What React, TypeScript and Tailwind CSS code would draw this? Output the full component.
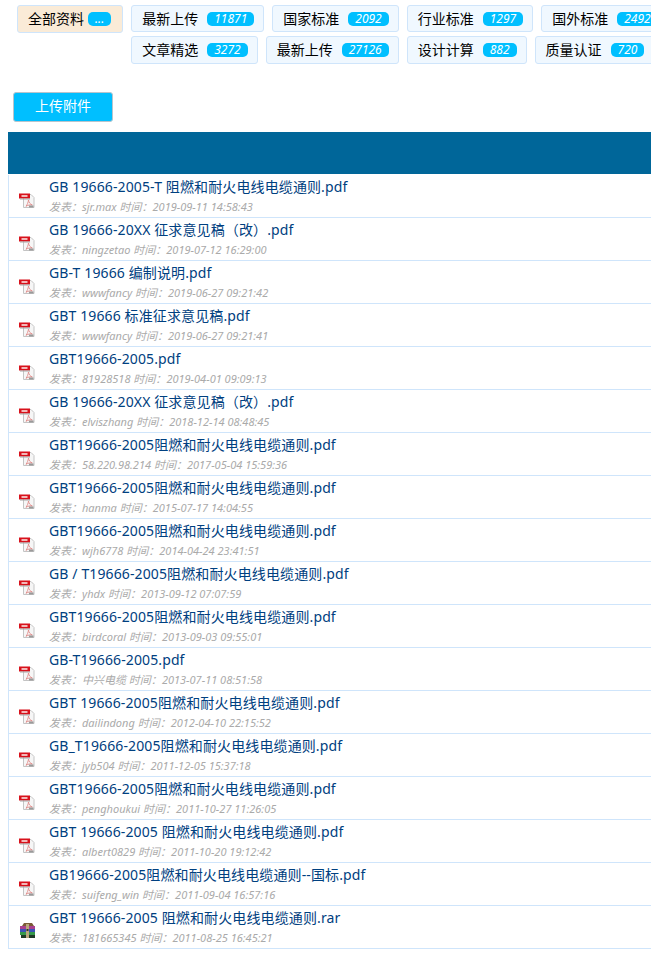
const row1 = [
  { name: "最新上传", count: "11871" },
  { name: "国家标准", count: "2092" },
  { name: "行业标准", count: "1297" },
  { name: "国外标准", count: "2492" },
];
const row2 = [
  { name: "文章精选", count: "3272" },
  { name: "最新上传", count: "27126" },
  { name: "设计计算", count: "882" },
  { name: "质量认证", count: "720" },
];

const files = [
  ["GB 19666-2005-T 阻燃和耐火电线电缆通则.pdf", "sjr.max", "2019-09-11 14:58:43"],
  ["GB 19666-20XX 征求意见稿（改）.pdf", "ningzetao", "2019-07-12 16:29:00"],
  ["GB-T 19666 编制说明.pdf", "wwwfancy", "2019-06-27 09:21:42"],
  ["GBT 19666 标准征求意见稿.pdf", "wwwfancy", "2019-06-27 09:21:41"],
  ["GBT19666-2005.pdf", "81928518", "2019-04-01 09:09:13"],
  ["GB 19666-20XX 征求意见稿（改）.pdf", "elviszhang", "2018-12-14 08:48:45"],
  ["GBT19666-2005阻燃和耐火电线电缆通则.pdf", "58.220.98.214", "2017-05-04 15:59:36"],
  ["GBT19666-2005阻燃和耐火电线电缆通则.pdf", "hanma", "2015-07-17 14:04:55"],
  ["GBT19666-2005阻燃和耐火电线电缆通则.pdf", "wjh6778", "2014-04-24 23:41:51"],
  ["GB / T19666-2005阻燃和耐火电线电缆通则.pdf", "yhdx", "2013-09-12 07:07:59"],
  ["GBT19666-2005阻燃和耐火电线电缆通则.pdf", "birdcoral", "2013-09-03 09:55:01"],
  ["GB-T19666-2005.pdf", "中兴电缆", "2013-07-11 08:51:58"],
  ["GBT 19666-2005阻燃和耐火电线电缆通则.pdf", "dailindong", "2012-04-10 22:15:52"],
  ["GB_T19666-2005阻燃和耐火电线电缆通则.pdf", "jyb504", "2011-12-05 15:37:18"],
  ["GBT19666-2005阻燃和耐火电线电缆通则.pdf", "penghoukui", "2011-10-27 11:26:05"],
  ["GBT 19666-2005 阻燃和耐火电线电缆通则.pdf", "albert0829", "2011-10-20 19:12:42"],
  ["GB19666-2005阻燃和耐火电线电缆通则--国标.pdf", "suifeng_win", "2011-09-04 16:57:16"],
  ["GBT 19666-2005 阻燃和耐火电线电缆通则.rar", "181665345", "2011-08-25 16:45:21"],
];

function PdfIcon() {
  return (
    <svg width="17" height="16" viewBox="0 0 17 16" className="mt-[10px] shrink-0">
      <path d="M4.500 1.500h7.500l3 3v10h-10.500z" fill="#f6f6f6" stroke="#c4c4c4" />
      <path d="M9.500 7c.3 2.500 1.800 4.300 3.800 5-2.200-.3-4.300 0-6.300 1.300 1.300-1.700 2.200-4 2.500-6.300z" fill="none" stroke="#e08a88" strokeWidth="0.900" />
      <rect x="10" y="12.500" width="4.500" height="2" fill="#9a9a9a" />
      <rect x="0" y="0.500" width="11" height="5" fill="#d8121c" />
      <rect x="1" y="5.500" width="10" height="1" fill="#a5a5a5" />
      <rect x="2.500" y="2" width="6" height="2" fill="#f3b7b7" />
    </svg>
  );
}

function RarIcon() {
  return (
    <svg width="16" height="15" viewBox="0 0 16 15" className="mt-[7px] ml-px shrink-0">
      <path d="M2 3l2-3h8l2 3z" fill="#7a5a36" />
      <rect x="0" y="3" width="15" height="3" fill="#a8408f" />
      <rect x="0" y="6" width="15" height="3" fill="#3c52b5" />
      <rect x="0" y="9" width="15" height="3" fill="#35994a" />
      <rect x="1" y="12" width="14" height="3" fill="#1f3a26" />
      <rect x="6" y="1" width="3" height="14" fill="#b9a67c" />
      <rect x="6.500" y="6" width="2" height="2" fill="#333333" />
    </svg>
  );
}

function Tab({ name, count, active, short }: { name: string; count: string; active?: boolean; short?: boolean }) {
  return (
    <div
      className={`flex shrink-0 items-center rounded-[3px] border border-[#cfe5fb] pl-[10px] text-[14px] leading-[20px] text-black ${
        active ? "gap-[4px] bg-[#faebd7] pr-[11px]" : "gap-[9px] bg-[#f0f8ff] pr-[9px]"
      } ${short ? "h-[27px]" : "h-[28px]"}`}
    >
      <span>{name}</span>
      <span className="rounded-[5px] bg-[#00bfff] px-[7px] text-[12px] leading-[14px] italic text-white">{count}</span>
    </div>
  );
}

export default function App() {
  return (
    <div
      className="h-[953px] w-[651px] overflow-hidden bg-white"
      style={{ fontFamily: '"Noto Sans", "Noto Sans CJK SC", sans-serif' }}
    >
      <div className="flex items-start gap-2 pl-[17px] pt-[5px]">
        <Tab name="全部资料" count="..." active />
        <div className="flex flex-col gap-1">
          <div className="flex gap-2">
            {row1.map((t) => (
              <Tab key={t.name} name={t.name} count={t.count} short />
            ))}
          </div>
          <div className="flex gap-2">
            {row2.map((t) => (
              <Tab key={t.name} name={t.name} count={t.count} />
            ))}
          </div>
        </div>
      </div>

      <div className="ml-[13px] mt-[28px] flex h-[30px] w-[100px] items-center justify-center rounded-[3px] border border-[#b8c4cc] bg-[#00bfff] pb-[2px] text-[14px] leading-[20px] text-white">
        上传附件
      </div>

      <div className="ml-2 mt-[10px] h-[42px] bg-[#006699]" />

      <div className="ml-2 mt-px border-l border-[#cfe5fb]">
        {files.map((f) => (
          <div key={f[0] + f[2]} className="flex h-[43px] items-center border-b border-[#cfe5fb] pl-[10px]">
            <div className="flex w-[30px] shrink-0">
              {f[0].endsWith(".rar") ? <RarIcon /> : <PdfIcon />}
            </div>
            <div className="min-w-0">
              <div className="whitespace-nowrap pt-px text-[14px] leading-[20px] tracking-[0.12px] text-[#004080]">{f[0]}</div>
              <div className="whitespace-nowrap text-[11px] leading-[19px] italic text-[#aaaaaa]">
                发表：{f[1]} 时间：{f[2]}
              </div>
            </div>
          </div>
        ))}
      </div>
    </div>
  );
}
